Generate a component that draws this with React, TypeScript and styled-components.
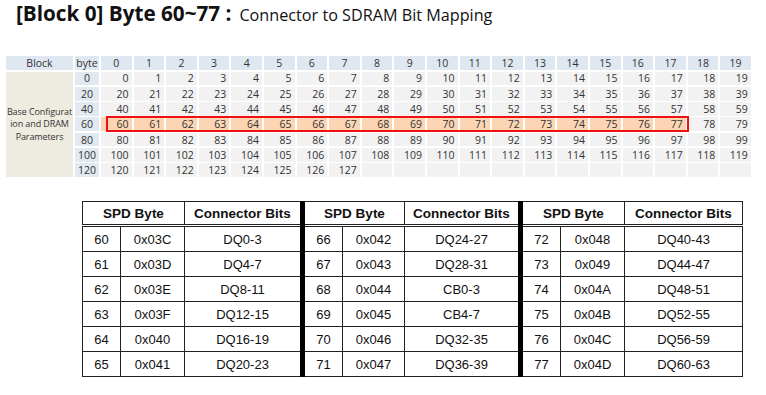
import React from "react";
import styled, { createGlobalStyle } from "styled-components";

const GlobalStyle = createGlobalStyle`
  html, body {
    margin: 0;
    padding: 0;
    background: #ffffff;
  }
  body {
    width: 766px;
    height: 395px;
    overflow: hidden;
  }
`;

const Page = styled.div`
  display: flex;
  flex-direction: column;
  align-items: flex-start;
`;

const Title = styled.h1`
  display: flex;
  align-items: baseline;
  gap: 8px;
  margin: 3px 0 0 16px;
  font-family: "Open Sans", "Noto Sans CJK KR", sans-serif;
  line-height: 21px;
  color: #111;
`;

const TitleMain = styled.span`
  font-size: 20.7px;
  font-weight: 700;
`;

const TitleSub = styled.span`
  font-size: 16.2px;
  font-weight: 400;
`;

/* ---- upper map ---- */

const MapGrid = styled.div`
  position: relative;
  display: grid;
  grid-template-columns: 67px 24px repeat(20, 30.6px);
  grid-template-rows: 14px repeat(7, 13.8px);
  column-gap: 2px;
  row-gap: 1.5px;
  margin: 30px 0 0 6px;
  font-family: "Open Sans", "Noto Sans CJK KR", sans-serif;
  font-size: 10.5px;
  color: #333;
`;

const HeadCell = styled.div`
  display: flex;
  align-items: center;
  justify-content: center;
  background: #dfe7f1;
`;

const ByteCell = styled.div`
  display: flex;
  align-items: center;
  justify-content: center;
  background: #e3e9f1;
`;

const DataCell = styled.div<{ $hot?: boolean }>`
  display: flex;
  align-items: center;
  justify-content: flex-end;
  padding-right: 3px;
  background: ${(p) => (p.$hot ? "#fcd5b4" : "#f2f2f2")};
`;

const BlockLabel = styled.div`
  grid-column: 1;
  grid-row: 2 / span 7;
  display: flex;
  align-items: center;
  justify-content: center;
  text-align: center;
  white-space: nowrap;
  background: #eeebe1;
  font-size: 9px;
  letter-spacing: -0.1px;
  line-height: 12.5px;
  color: #333;
`;

/* overlay: absolutely positioned grid child uses row 60's area */
const Marker = styled.div`
  position: absolute;
  grid-column: 3 / 21;
  grid-row: 5 / 6;
  top: -1px;
  bottom: -1px;
  left: 5px;
  right: -3px;
  border: 2px solid #ee1111;
  pointer-events: none;
`;

/* ---- lower table ---- */

const SpdTable = styled.table`
  margin: 24px 0 0 82px;
  width: 660px;
  table-layout: fixed;
  border-collapse: collapse;
  font-family: "Liberation Sans", Arial, sans-serif;
  font-size: 13px;
  color: #111;
`;

const Th = styled.th<{ $split?: boolean }>`
  height: 22px;
  padding: 0;
  font-weight: 700;
  font-size: 13.5px;
  text-align: center;
  border: 1px solid #222;
  border-bottom: 3px double #222;
  border-left: ${(p) => (p.$split ? "5px solid #000" : "1px solid #222")};
`;

const Td = styled.td<{ $split?: boolean }>`
  height: 24px;
  padding: 0;
  text-align: center;
  border: 1px solid #222;
  border-left: ${(p) => (p.$split ? "5px solid #000" : "1px solid #222")};
`;

const byteRows = [0, 20, 40, 60, 80, 100, 120];
const hotRow = 60;

const spd: [number, string, string][][] = [
  [[60, "0x03C", "DQ0-3"], [66, "0x042", "DQ24-27"], [72, "0x048", "DQ40-43"]],
  [[61, "0x03D", "DQ4-7"], [67, "0x043", "DQ28-31"], [73, "0x049", "DQ44-47"]],
  [[62, "0x03E", "DQ8-11"], [68, "0x044", "CB0-3"], [74, "0x04A", "DQ48-51"]],
  [[63, "0x03F", "DQ12-15"], [69, "0x045", "CB4-7"], [75, "0x04B", "DQ52-55"]],
  [[64, "0x040", "DQ16-19"], [70, "0x046", "DQ32-35"], [76, "0x04C", "DQ56-59"]],
  [[65, "0x041", "DQ20-23"], [71, "0x047", "DQ36-39"], [77, "0x04D", "DQ60-63"]],
];

const colWidths = [38, 64, 118, 40, 62, 116, 40, 64, 118];

export default function App() {
  return (
    <Page>
      <GlobalStyle />
      <Title>
        <TitleMain>[Block 0] Byte 60~77 :</TitleMain>
        <TitleSub>Connector to SDRAM Bit Mapping</TitleSub>
      </Title>

      <MapGrid>
        <HeadCell>Block</HeadCell>
        <HeadCell>byte</HeadCell>
        {Array.from({ length: 20 }, (_, c) => (
          <HeadCell key={`h${c}`}>{c}</HeadCell>
        ))}
        <BlockLabel>
          Base Configurat
          <br />
          ion and DRAM
          <br />
          Parameters
        </BlockLabel>
        {byteRows.map((base) => (
          <React.Fragment key={base}>
            <ByteCell>{base}</ByteCell>
            {Array.from({ length: 20 }, (_, c) => {
              const v = base + c;
              return (
                <DataCell key={c} $hot={base === hotRow && c <= 17}>
                  {v <= 127 ? v : ""}
                </DataCell>
              );
            })}
          </React.Fragment>
        ))}
        <Marker />
      </MapGrid>

      <SpdTable>
        <colgroup>
          {colWidths.map((w, i) => (
            <col key={i} style={{ width: w }} />
          ))}
        </colgroup>
        <thead>
          <tr>
            {[0, 1, 2].map((g) => (
              <React.Fragment key={g}>
                <Th colSpan={2} $split={g > 0}>SPD Byte</Th>
                <Th>Connector Bits</Th>
              </React.Fragment>
            ))}
          </tr>
        </thead>
        <tbody>
          {spd.map((row, r) => (
            <tr key={r}>
              {row.map(([n, hex, bits], g) => (
                <React.Fragment key={g}>
                  <Td $split={g > 0}>{n}</Td>
                  <Td>{hex}</Td>
                  <Td>{bits}</Td>
                </React.Fragment>
              ))}
            </tr>
          ))}
        </tbody>
      </SpdTable>
    </Page>
  );
}
